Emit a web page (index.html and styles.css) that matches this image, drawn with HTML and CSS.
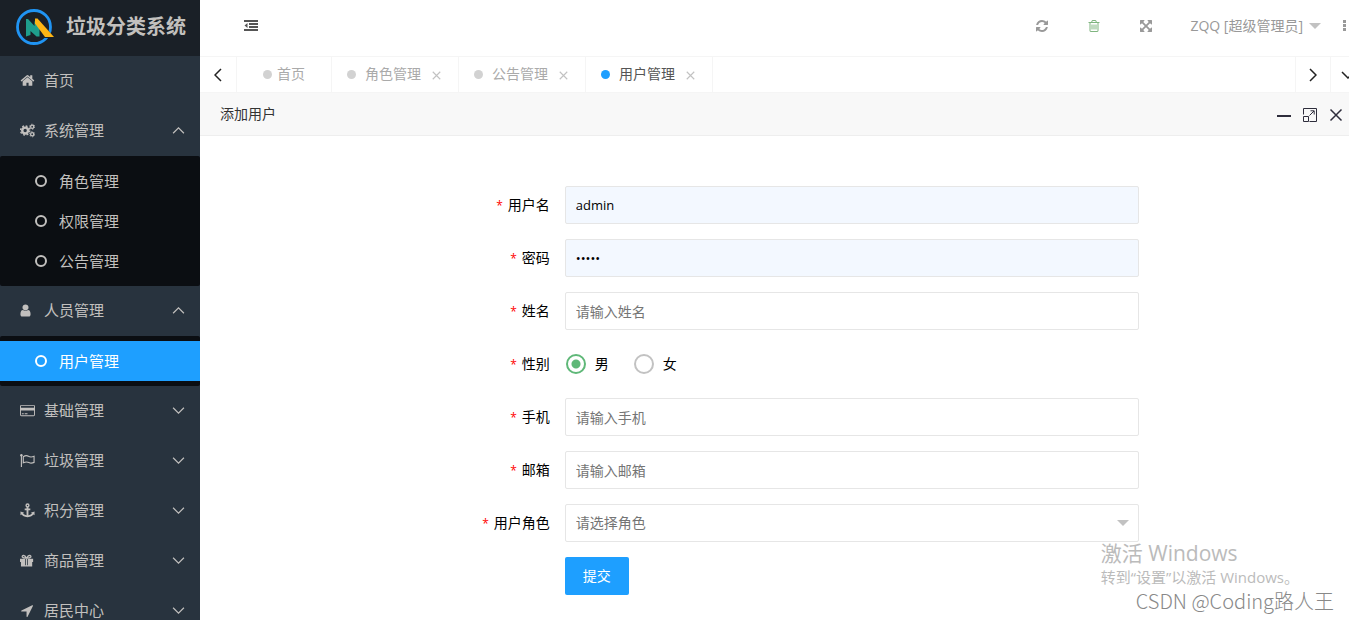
FILE: index.html
```html
<!DOCTYPE html>
<html lang="zh-CN">
<head>
<meta charset="utf-8">
<title>垃圾分类系统</title>
<link rel="stylesheet" href="styles.css">
</head>
<body>
<svg class="defs" aria-hidden="true">
  <symbol id="up" viewBox="0 0 12 12"><path d="M1 8.500 6 3.500 11 8.500" fill="none" stroke="currentColor" stroke-width="1.100"/></symbol>
  <symbol id="down" viewBox="0 0 12 12"><path d="M1 3.500 6 8.500 11 3.500" fill="none" stroke="currentColor" stroke-width="1.100"/></symbol>
  <symbol id="close" viewBox="0 0 12 12"><path d="M1 1 11 11M11 1 1 11" fill="none" stroke="currentColor" stroke-width="1.500"/></symbol>
</svg>
<div class="app">
  <aside class="side">
    <div class="brand">
      <svg class="logo" viewBox="0 0 38 38" aria-hidden="true">
        <circle cx="18" cy="19" r="16.500" fill="none" stroke="#2094f3" stroke-width="2.800"/>
        <path d="M18.500 8.500 39.500 30H27.500L18.500 19Z" fill="#1a2027"/>
        <path d="M10 11H12L18.500 18V13L23.500 20V28.500H20.500L14.500 23V27L10 28.500Z" fill="#1f9e8c"/>
        <path d="M19 10.500H21.500L38 29H29L19 15.500Z" fill="#fdb515"/>
      </svg>
      <h1>垃圾分类系统</h1>
    </div>
    <nav class="menu">
      <a class="item" href="#"><svg class="ico" viewBox="0 0 1792 1792"><path d="M1472 992v480q0 26-19 45t-45 19h-384v-384h-256v384h-384q-26 0-45-19t-19-45v-480q0-1 .5-3t.5-3l575-474 575 474q1 2 1 6zm223-69l-62 74q-8 9-21 11h-3q-13 0-21-7l-692-577-692 577q-12 8-24 7-13-2-21-11l-62-74q-8-10-7-23.500t11-21.500l719-599q32-26 76-26t76 26l244 204v-195q0-14 9-23t23-9h192q14 0 23 9t9 23v408l219 182q10 8 11 21.500t-7 23.500z"/></svg>首页</a>
      <a class="item" href="#"><svg class="ico" viewBox="0 0 16 16"><g fill="none" stroke="currentColor"><circle cx="5.500" cy="8" r="3.100" stroke-width="2.600"/><circle cx="5.500" cy="8" r="4.900" stroke-width="1.500" stroke-dasharray="2 1.850"/><circle cx="13" cy="4" r="1.700" stroke-width="1.400"/><circle cx="13" cy="4" r="2.700" stroke-width="1" stroke-dasharray="1.400 1.430"/><circle cx="13" cy="12" r="1.700" stroke-width="1.400"/><circle cx="13" cy="12" r="2.700" stroke-width="1" stroke-dasharray="1.400 1.430"/></g></svg>系统管理<svg class="arrow"><use href="#up"/></svg></a>
      <div class="sub">
        <a href="#"><i></i>角色管理</a>
        <a href="#"><i></i>权限管理</a>
        <a href="#"><i></i>公告管理</a>
      </div>
      <a class="item" href="#"><svg class="ico user" viewBox="200 100 1392 1600"><path d="M1536 1399q0 109-62.500 187t-150.500 78h-854q-88 0-150.500-78t-62.500-187q0-85 8.500-160.500t31.500-152 58.500-131 94-89 134.500-34.500q131 128 313 128t313-128q76 0 134.500 34.500t94 89 58.500 131 31.500 152 8.500 160.500zm-256-887q0 159-112.500 271.500t-271.500 112.500-271.500-112.500-112.500-271.500 112.500-271.500 271.500-112.500 271.500 112.500 112.500 271.500z"/></svg>人员管理<svg class="arrow"><use href="#up"/></svg></a>
      <div class="sub">
        <a class="on" href="#"><i></i>用户管理</a>
      </div>
      <a class="item" href="#"><svg class="ico" viewBox="0 0 16 16"><path fill-rule="evenodd" d="M1.500 2h13Q16 2 16 3.500v9q0 1.500-1.500 1.500h-13Q0 14 0 12.500v-9Q0 2 1.500 2ZM1 3v2h14V3ZM1 8v5h14V8ZM2 11h2v1H2ZM5 11h3v1H5Z"/></svg>基础管理<svg class="arrow"><use href="#down"/></svg></a>
      <a class="item" href="#"><svg class="ico" viewBox="0 0 16 16"><path d="M1.500 2V15M3.500 4Q6.500 2 9 3.500T15 3.500V10Q12 11.500 9.500 10.200T3.500 10.500Z" fill="none" stroke="currentColor" stroke-width="1.200"/><circle cx="1.500" cy="2.300" r="1.300"/></svg>垃圾管理<svg class="arrow"><use href="#down"/></svg></a>
      <a class="item" href="#"><svg class="ico" viewBox="0 0 16 16"><g fill="none" stroke="currentColor"><circle cx="8" cy="2.600" r="1.500" stroke-width="1.500"/><path d="M8 4V14M5 6.800H11" stroke-width="2"/><path d="M2 10.500Q3 14 8 14.200 13 14 14 10.500" stroke-width="1.900"/></g><path d="M.5 13V9L4.500 10.500ZM15.500 13V9L11.500 10.500Z"/></svg>积分管理<svg class="arrow"><use href="#down"/></svg></a>
      <a class="item" href="#"><svg class="ico" viewBox="0 0 16 16"><path fill-rule="evenodd" d="M0 6H14V9.500H13V14.500H1V9.500H0ZM5.500 6.500V13H6.300V6.500ZM7.700 6.500V13H8.500V6.500Z"/><path d="M7 5.800Q5.400 2.300 3.500 2.500 2 3 2.500 4.400 3.200 5.500 7 5.500 10.800 5.500 11.500 4.400 12 3 10.500 2.500 8.600 2.300 7 5.800" fill="none" stroke="currentColor" stroke-width="1.400"/></svg>商品管理<svg class="arrow"><use href="#down"/></svg></a>
      <a class="item" href="#"><svg class="ico" viewBox="100 0 1692 1792"><path d="M1593 349l-640 1280q-17 35-57 35-5 0-15-2-22-5-35.500-22.500t-13.500-39.500v-576h-576q-22 0-39.500-13.500t-22.500-35.500 4-42 29-30l1280-640q13-7 29-7 27 0 45 19 15 14 18.500 34.500t-6.500 39.500z"/></svg>居民中心<svg class="arrow"><use href="#down"/></svg></a>
    </nav>
  </aside>

  <main class="main">
    <header class="top">
      <button class="tool fold" aria-label="收起菜单"><svg viewBox="0 0 14 12"><path d="M0 0h14v2H0ZM5 3h9v2H5ZM5 6h9v2H5ZM0 9h14v2H0ZM3.500 3v5L.5 5.500Z"/></svg></button>
      <div class="tools">
        <button class="tool" aria-label="刷新"><svg viewBox="0 0 1792 1792"><path d="M1639 1056q0 5-1 7-64 268-268 434.500t-478 166.500q-146 0-282.500-55t-243.500-157l-129 129q-19 19-45 19t-45-19-19-45v-448q0-26 19-45t45-19h448q26 0 45 19t19 45-19 45l-137 137q71 66 161 102t187 36q134 0 250-65t186-179q11-17 53-117 8-23 30-23h192q13 0 22.500 9.500t9.500 22.500zm25-800v448q0 26-19 45t-45 19h-448q-26 0-45-19t-19-45 19-45l138-138q-148-137-349-137-134 0-250 65t-186 179q-11 17-53 117-8 23-30 23h-199q-13 0-22.500-9.500t-9.500-22.500v-7q65-268 270-434.500t480-166.500q146 0 284 55.500t245 156.500l130-129q19-19 45-19t45 19 19 45z"/></svg></button>
        <button class="tool trash" aria-label="清理"><svg viewBox="0 0 1792 1792"><path d="M704 736v576q0 14-9 23t-23 9h-64q-14 0-23-9t-9-23v-576q0-14 9-23t23-9h64q14 0 23 9t9 23zm256 0v576q0 14-9 23t-23 9h-64q-14 0-23-9t-9-23v-576q0-14 9-23t23-9h64q14 0 23 9t9 23zm256 0v576q0 14-9 23t-23 9h-64q-14 0-23-9t-9-23v-576q0-14 9-23t23-9h64q14 0 23 9t9 23zm128 724v-948h-896v948q0 22 7 40.500t14.500 27 10.500 8.500h832q3 0 10.500-8.500t14.500-27 7-40.500zm-672-1076h448l-48-117q-7-9-17-11h-317q-10 2-17 11zm928 32v64q0 14-9 23t-23 9h-96v948q0 83-47 143.500t-113 60.500h-832q-66 0-113-58.500t-47-141.500v-952h-96q-14 0-23-9t-9-23v-64q0-14 9-23t23-9h309l70-167q15-37 54-63t79-26h320q40 0 79 26t54 63l70 167h309q14 0 23 9t9 23z"/></svg></button>
        <button class="tool" aria-label="全屏"><svg viewBox="0 0 1792 1792"><path d="M1411 541l-355 355 355 355 144-144q29-31 70-14 39 17 39 59v448q0 26-19 45t-45 19h-448q-42 0-59-40-17-39 14-69l144-144-355-355-355 355 144 144q31 30 14 69-17 40-59 40h-448q-26 0-45-19t-19-45v-448q0-42 40-59 39-17 69 14l144 144 355-355-355-355-144 144q-19 19-45 19-12 0-24-5-40-17-40-59v-448q0-26 19-45t45-19h448q42 0 59 40 17 39-14 69l-144 144 355 355 355-355-144-144q-31-30-14-69 17-40 59-40h448q26 0 45 19t19 45v448q0 42-39 59-13 5-25 5-26 0-45-19z"/></svg></button>
        <button class="account">ZQQ [超级管理员]<span class="caret"></span></button>
        <button class="more" aria-label="更多"><svg viewBox="0 0 3 12"><path d="M0 0h3v3H0ZM0 4h3v3H0ZM0 8h3v3H0Z"/></svg></button>
      </div>
    </header>

    <div class="tabs">
      <button class="step" aria-label="向左"><svg viewBox="0 0 8 14"><path d="M7 1 1 7 7 13"/></svg></button>
      <a class="tab home" href="#"><i></i>首页</a>
      <a class="tab" href="#"><i></i>角色管理<svg><use href="#close"/></svg></a>
      <a class="tab" href="#"><i></i>公告管理<svg><use href="#close"/></svg></a>
      <a class="tab on" href="#"><i></i>用户管理<svg><use href="#close"/></svg></a>
      <button class="step next" aria-label="向右"><svg viewBox="0 0 8 14"><path d="M1 1 7 7 1 13"/></svg></button>
      <button class="step drop" aria-label="标签操作"><svg viewBox="0 0 14 8"><path d="M1 1 7 7 13 1"/></svg></button>
    </div>

    <section class="layer">
      <div class="layer-head">
        <h2>添加用户</h2>
        <div class="win">
          <button aria-label="最小化"><svg viewBox="0 0 14 14"><path d="M0 8h14" stroke-width="2"/></svg></button>
          <button aria-label="最大化"><svg viewBox="0 0 14 14"><path d="M.5 6.500V.5H13.500V13.500H6.500M.5 8.500H5.500V13.500H.5ZM6.500 7.500 11 3M7.500 2.800H11.200V6.500"/></svg></button>
          <button aria-label="关闭"><svg viewBox="0 0 14 14"><path d="M1.500 1.500 12.500 12.500M12.500 1.500 1.500 12.500" stroke-width="1.500"/></svg></button>
        </div>
      </div>
      <form class="form">
        <label for="account"><b>*</b>用户名</label><input class="box filled" id="account" type="text" value="admin">
        <label for="pwd"><b>*</b>密码</label><input class="box filled" id="pwd" type="password" value="admin">
        <label for="name"><b>*</b>姓名</label><input class="box" id="name" type="text" placeholder="请输入姓名">
        <span class="label" id="sex"><b>*</b>性别</span>
        <div class="radios" role="radiogroup" aria-labelledby="sex">
          <label><input type="radio" name="sex" checked>男</label>
          <label><input type="radio" name="sex">女</label>
        </div>
        <label for="phone"><b>*</b>手机</label><input class="box" id="phone" type="text" placeholder="请输入手机">
        <label for="mail"><b>*</b>邮箱</label><input class="box" id="mail" type="text" placeholder="请输入邮箱">
        <label for="role"><b>*</b>用户角色</label>
        <div class="pick"><select class="box" id="role"><option>请选择角色</option></select><span class="caret"></span></div>
        <button class="submit" type="button">提交</button>
      </form>
    </section>
  </main>
</div>
<div class="notice">
  <p class="big">激活 Windows</p>
  <p class="small">转到“设置”以激活 Windows。</p>
</div>
<p class="credit">CSDN @Coding路人王</p>
</body>
</html>
```
FILE: styles.css
```css
* { box-sizing: border-box; }
body, h1, h2, p { margin: 0; }
body {
  font: 14px/20px "Open Sans", "Noto Sans CJK SC", sans-serif;
  color: #000;
  background: #fff;
  overflow: hidden;
}
button, input, select { font: inherit; color: inherit; margin: 0; }
button { border: 0; padding: 0; background: none; display: flex; align-items: center; justify-content: center; }
a { text-decoration: none; color: inherit; }
svg { fill: currentColor; flex: none; }
.defs { display: none; }
.app { display: flex; height: 100vh; overflow: hidden; }

.side { flex: none; width: 200px; background: #28333e; color: #c2c0be; overflow: hidden; }
.brand { display: flex; align-items: center; gap: 12px; height: 56px; padding: 0 0 2px 16px; background: #1a2027; }
.logo { width: 38px; height: 38px; }
.brand h1 { font-size: 20px; line-height: 28px; white-space: nowrap; }
.menu { font-size: 15px; }
.item { display: flex; align-items: center; height: 50px; padding: 0 15px 2px 20px; }
.ico { width: 15px; height: 15px; margin-right: 9px; }
.user { width: 11px; height: 13px; margin-right: 13px; }
.arrow { width: 13px; height: 13px; margin-left: auto; }
.sub { padding: 5px 0; background: #0b0e12; border-radius: 2px; }
.sub a { display: flex; align-items: center; gap: 12px; height: 40px; padding-left: 35px; }
.sub i { width: 12px; height: 12px; border: 2px solid; border-radius: 50%; }
.sub .on { background: #1e9fff; color: #fff; }

.main { flex: 1; min-width: 0; }
.top { display: flex; justify-content: space-between; height: 56px; padding-bottom: 4px; color: #999; }
.tool { width: 52px; }
.tool svg { width: 14px; height: 14px; }
.fold { width: 102px; color: #555; }
.fold svg { height: 12px; }
.tools { display: flex; }
.trash { color: #7fb57f; }
.account { gap: 6px; padding: 0 22px 0 18px; }
.caret { border: 6px solid transparent; border-bottom: 0; border-top-color: #c2c2c2; }
.more { padding-right: 3px; }
.more svg { width: 3px; height: 12px; }

.tabs { display: flex; height: 37px; border: solid #f5f5f5; border-width: 1px 0; color: #aaa; }
.step { width: 37px; border-right: 1px solid #f5f5f5; color: #222; overflow: hidden; }
.step svg { width: 8px; height: 14px; fill: none; stroke: currentColor; stroke-width: 1.5; }
.next { width: 36px; margin-left: auto; border-left: 1px solid #f5f5f5; }
.drop { width: 18px; border: 0; justify-content: flex-start; padding-left: 10px; }
.drop svg { width: 14px; height: 8px; }
.tab { display: flex; align-items: center; padding: 0 17px 2px 15px; border-right: 1px solid #f5f5f5; white-space: nowrap; }
.tab i { width: 9px; height: 9px; margin: 1px 9px 0 0; border-radius: 50%; background: #d2d2d2; }
.tab.home { padding: 0 26px 2px; }
.home i { margin-right: 5px; }
.tab svg { width: 9px; height: 9px; margin: 3px 0 0 11px; color: #c2c2c2; }
.tab.on { color: #555; }
.tab.on i { background: #1e9fff; }

.layer-head { display: flex; justify-content: space-between; align-items: center; height: 43px; padding: 0 6px 0 20px; background: #f8f8f8; border-bottom: 1px solid #eee; color: #333; }
.layer-head h2 { font-size: 14px; font-weight: 400; }
.win { display: flex; gap: 12px; padding-top: 2px; color: #2e2d3c; }
.win svg { width: 14px; height: 14px; fill: none; stroke: currentColor; }
.form { display: grid; grid-template-columns: 155px 1fr; gap: 15px 0; grid-auto-rows: 38px; width: calc(50% + 155px); margin: 50px auto 0; }
.form > label, .label { padding: 9px 15px; text-align: right; }
.form b { margin-right: 5px; font-size: 12px; font-weight: 400; color: red; }
.box { width: 100%; height: 38px; padding: 0 10px; border: 1px solid #e6e6e6; border-radius: 2px; background: #fff; outline: 0; }
.box::placeholder { color: #757575; }
.filled { background: #f3f8ff; font-size: 13px; }
.radios { display: flex; align-items: center; gap: 24px; }
.radios label { display: flex; align-items: center; gap: 9px; }
.radios input { appearance: none; width: 20px; height: 20px; margin-left: 1px; border: 2px solid #c2c2c2; border-radius: 50%; }
.radios input:checked { border-color: #5fb878; background: radial-gradient(circle, #5fb878 4px, #fff 5px); }
.pick { position: relative; }
.pick select { appearance: none; color: #757575; }
.pick .caret { position: absolute; right: 10px; top: 16px; pointer-events: none; }
.submit { grid-column: 2; justify-self: start; padding: 0 18px; border-radius: 2px; background: #1e9fff; color: #fff; }

.notice { position: absolute; right: 50px; bottom: 33px; color: #bbb; pointer-events: none; }
.big { font-size: 21px; line-height: 28px; }
.small { font-size: 15px; line-height: 20px; white-space: nowrap; }
.credit { position: absolute; right: 15px; bottom: 5px; font: 300 20px/28px "Noto Sans CJK SC", sans-serif; color: #888; }
```
